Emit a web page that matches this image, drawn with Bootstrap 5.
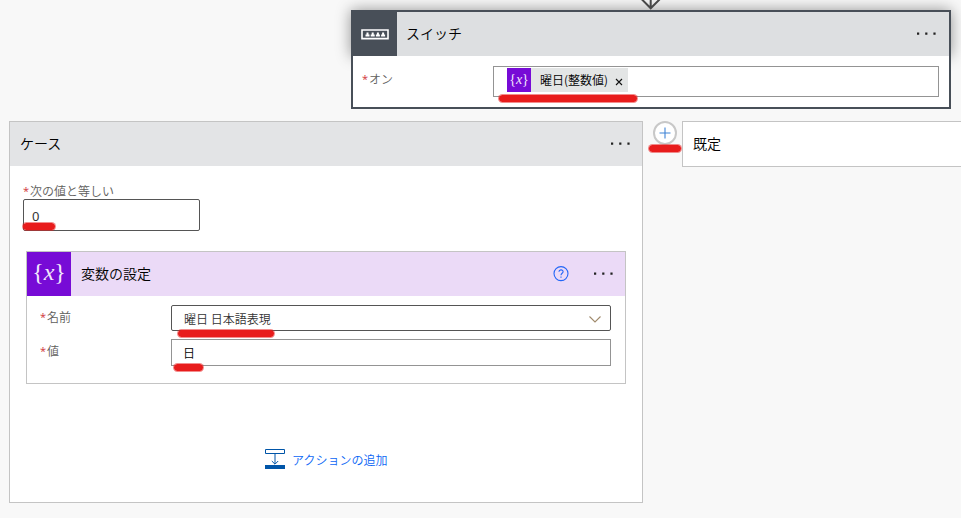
<!DOCTYPE html>
<html lang="ja">
<head>
<meta charset="utf-8">
<meta name="viewport" content="width=device-width, initial-scale=1">
<title>スイッチ</title>
<link href="https://cdn.jsdelivr.net/npm/bootstrap@5.3.0/dist/css/bootstrap.min.css" rel="stylesheet">
<style>
body{background:#f8f8f8;font-family:"Noto Sans CJK JP",sans-serif;font-size:12px;line-height:18px;color:#000;font-weight:350}
.flow{width:961px;height:518px;padding-top:10px}
.title{font-size:14px;line-height:20px;padding-bottom:2px}
.step{border-radius:0;border:1px solid #c4c4c4;background:#fff}
.step-head{height:44px;background:#e3e4e6}
.switch-step{width:600px;height:99px;margin-left:351px;border:2px solid #484f58}
.switch-shade{left:351px;top:10px;width:600px;height:46px;box-shadow:0 0 14px rgba(0,0,0,.42)}
.switch-step .step-head{background:#dddfe1}
.switch-icon{width:44px;height:44px;background:#484f58}
.dots{width:21px;height:3px;display:block;margin-bottom:1px}
.field{border:1px solid #949494;background:#fff}
.field-dark{border-color:#555;border-radius:2px}
.lbl{color:#605e5c}
.req{color:#d13438;display:inline-block;width:7px;font:400 11px/12px "Open Sans",sans-serif;position:relative;top:-1px}
.var-icon{width:44px;height:44px;background:#770bd6}
.token{height:24px;background:#e3e5e5}
.token-icon{width:24px;height:24px;background:#770bd6}
.branches{margin-top:12px;padding-left:9px}
.case-step{width:634px;height:382px}
.case-value{font:13px/18px "Noto Sans",sans-serif;color:#333}
.var-step{width:600px;height:133px;margin:20px 0 0 16px}
.var-step .step-head{background:#ebdaf7}
.plus{width:24px;height:24px;border:2px solid #c8c8c8;margin-left:10px;background:#fff}
.default-step{width:300px;height:46px;margin-left:5px}
.add{color:#0a66f5;margin:65px 0 0 255px}
.underline-mark{height:9px;border-radius:5px;background:#e81c1c;background-clip:padding-box;border:1px solid rgba(232,28,28,.5)}
.arrow-tip{left:640px;top:0}
svg text{font-family:"Liberation Serif",serif}
</style>
<script src="https://cdn.jsdelivr.net/npm/bootstrap@5.3.0/dist/js/bootstrap.bundle.min.js"></script>
</head>
<body>
<svg class="d-none">
  <symbol id="dots" viewBox="0 0 21 3"><path d="M1 .5h2.2v2.2H1zM9.2.5h2.2v2.2H9.2zM17.4.5h2.2v2.2h-2.2z" fill="#222"/></symbol>
</svg>
<main class="flow position-relative overflow-hidden">
  <div class="switch-shade position-absolute"></div>
  <svg class="arrow-tip position-absolute" width="22" height="10"><path d="M1.5-1 10.7 8.3 20-1M10.7-1V8" fill="none" stroke="#484848" stroke-width="2"/></svg>

  <section class="step switch-step position-relative">
    <header class="step-head d-flex align-items-center">
      <div class="switch-icon d-flex align-items-center justify-content-center">
        <svg width="28" height="11" viewBox="0 0 28 11"><path d="M1 1h26v8.6H1z" fill="none" stroke="#fff" stroke-width="1.6"/><path d="M4.5 7.5V5.5h1V3.5h2v2h1v2zM9.7 7.5V5.5h1V3.5h2v2h1v2zM14.9 7.5V5.5h1V3.5h2v2h1v2zM20.1 7.5V5.5h1V3.5h2v2h1v2z" fill="#fff"/></svg>
      </div>
      <span class="title" style="margin-left:9px">スイッチ</span>
      <svg class="dots ms-auto" style="margin-right:12px"><use href="#dots"/></svg>
    </header>
    <div class="d-flex" style="padding:10px 10px 0 9px">
      <label class="lbl" style="width:131px;padding-top:4px"><span class="req">*</span>オン</label>
      <div class="field flex-grow-1" style="height:31px;padding:1px 0 0 13px">
        <span class="token d-inline-flex align-items-center">
          <span class="token-icon"><svg width="24" height="24" class="d-block"><text x="12" y="16" text-anchor="middle" font-size="14" fill="#f3e8fc">{<tspan font-style="italic">x</tspan>}</text></svg></span>
          <span style="margin-left:9px">曜日(整数値)</span>
          <svg width="8" height="8" style="margin:3px 5px 0 7px"><path d="M1 1l6 6M7 1 1 7" stroke="#111" stroke-width="1.1"/></svg>
        </span>
      </div>
    </div>
  </section>

  <div class="branches d-flex align-items-start">
    <section class="step case-step flex-shrink-0">
      <header class="step-head d-flex align-items-center">
        <span class="title" style="margin-left:10px">ケース</span>
        <svg class="dots ms-auto" style="margin-right:11px"><use href="#dots"/></svg>
      </header>
      <div style="padding:16px 0 0 13px">
        <label class="lbl d-block" style="height:17px"><span class="req">*</span>次の値と等しい</label>
        <div class="field field-dark case-value" style="width:177px;height:32px;padding:7px 0 0 8px">0</div>
      </div>
      <section class="step var-step">
        <header class="step-head d-flex align-items-center">
          <div class="var-icon"><svg width="44" height="44" class="d-block"><text x="22" y="28" text-anchor="middle" font-size="24" fill="#f3e8fc">{<tspan font-style="italic">x</tspan>}</text></svg></div>
          <span class="title" style="margin-left:10px">変数の設定</span>
          <svg width="16" height="16" class="ms-auto" style="margin-right:24px"><circle cx="8" cy="7.6" r="7" fill="none" stroke="#2266f7" stroke-width="1.1"/><path d="M6 5.8C6 3.1 10.2 3.3 10.1 5.7 10 7.3 8 7.3 8 9.2M8 10.5v1.2" fill="none" stroke="#2266f7" stroke-width="1.1"/></svg>
          <svg class="dots" style="margin-right:11px"><use href="#dots"/></svg>
        </header>
        <div class="d-flex" style="padding:9px 14px 0 13px">
          <label class="lbl" style="width:131px;padding-top:3px"><span class="req">*</span>名前</label>
          <div class="field field-dark flex-grow-1 d-flex align-items-center" style="height:26px;padding:2px 8px 0 12px;color:#333">曜日 日本語表現
            <svg width="14" height="9" class="ms-auto"><path d="M1.5 1.5 7 7l5.5-5.5" fill="none" stroke="#a08a6c" stroke-width="1.1"/></svg></div>
        </div>
        <div class="d-flex" style="padding:8px 14px 0 13px">
          <label class="lbl" style="width:131px;padding-top:3px"><span class="req">*</span>値</label>
          <div class="field flex-grow-1" style="height:27px;padding:4px 0 0 11px">日</div>
        </div>
      </section>
      <div class="add d-flex align-items-center">
        <svg width="20" height="20"><path d="M.5.5h19v4H.5zM10 5v10M6.8 12 10 15.2 13.2 12" fill="none" stroke="#0055a8"/><path d="M0 16h20v4H0z" fill="#0055a8"/></svg>
        <span style="margin-left:7px;padding-top:1px">アクションの追加</span>
      </div>
    </section>
    <div class="plus rounded-circle d-flex align-items-center justify-content-center flex-shrink-0">
      <svg width="12" height="12"><path d="M6 .5v11M.5 6h11" stroke="#3f83d5" stroke-width="1.1"/></svg>
    </div>
    <section class="step default-step flex-shrink-0 d-flex align-items-center" style="padding-left:10px"><span class="title">既定</span></section>
  </div>

  <i class="underline-mark position-absolute" style="left:498px;top:94px;width:140px"></i>
  <i class="underline-mark position-absolute" style="left:648px;top:144px;width:34px"></i>
  <i class="underline-mark position-absolute" style="left:22px;top:222px;width:34px"></i>
  <i class="underline-mark position-absolute" style="left:177px;top:329px;width:98px"></i>
  <i class="underline-mark position-absolute" style="left:173px;top:363px;width:31px"></i>
</main>
</body>
</html>
